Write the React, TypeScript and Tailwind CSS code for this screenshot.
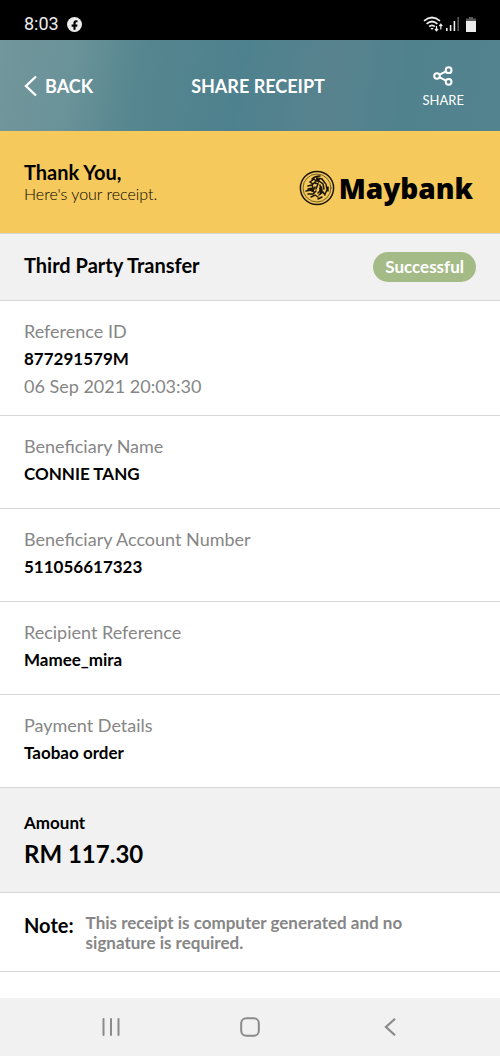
type Field = {
  label: string;
  value: string;
  date?: string;
};

const fields: Field[] = [
  { label: "Reference ID", value: "877291579M", date: "06 Sep 2021 20:03:30" },
  { label: "Beneficiary Name", value: "CONNIE TANG" },
  { label: "Beneficiary Account Number", value: "511056617323" },
  { label: "Recipient Reference", value: "Mamee_mira" },
  { label: "Payment Details", value: "Taobao order" },
];

function StatusBar() {
  return (
    <div className="flex h-10 items-center justify-between bg-black px-6 pt-2 text-[#ececec]">
      <div className="flex items-center gap-2">
        <span className="font-[Roboto,sans-serif] text-lg">8:03</span>
        {/* facebook */}
        <svg viewBox="0 0 14 14" className="size-[15px]">
          <circle cx="7" cy="7" r="7" fill="#ececec" />
          <path
            d="M6 12V9H4.3V7H6V5.7C6 3.9 7 3 8.6 3h1.2v1.8H8.9c-.7 0-.9.4-.9 1V7h1.8l-.3 2H8v3z"
            fill="#000"
          />
        </svg>
      </div>
      <div className="flex items-center">
        {/* wifi */}
        <svg viewBox="0 0 20 16" className="h-4 w-5" fill="none" stroke="currentColor">
          <path d="M1 4.8Q9 -1.8 17 4.8M3.6 7.8Q9 3.2 14.4 7.8M6.2 10.6Q9 8 11.8 10.6" strokeWidth="1.7" />
          <path d="M7.4 12h3.2L9 14z" fill="currentColor" stroke="none" />
          <path d="M13.5 10v5M12 13l1.5 1.8 1.5-1.8M17.8 13.4v-5M16.3 10l1.5-1.8L19.3 10" strokeWidth="1.2" />
        </svg>
        {/* signal */}
        <svg viewBox="0 0 14 14" className="ml-[3px] h-[14px] w-[14px]" fill="currentColor">
          <path d="M0 11h1.6v3H0zM3.8 8h1.6v6H3.8zM7.6 4h1.6v10H7.6z" />
          <path d="M11.4 0H13v14h-1.6z" fill="#5a5a5a" />
        </svg>
        {/* battery */}
        <svg viewBox="0 0 10 15" className="ml-[6px] h-[15px] w-[10px]">
          <path d="M3 0h4v1.5h3V5H0V1.5h3z" fill="#5a5a5a" />
          <path d="M0 4h10v11H0z" fill="#ececec" />
        </svg>
      </div>
    </div>
  );
}

function Header() {
  return (
    <header className="grid h-[91px] grid-cols-[1fr_auto_1fr] items-center bg-[linear-gradient(100deg,#72979c_0%,#6a9299_15%,#56868f_28%,#4e818e_48%,#58838e_66%,#50828e_80%,#53838e_100%)] px-6 text-white">
      <button type="button" className="flex items-center gap-2 text-lg font-bold">
        <svg viewBox="0 0 13 22" className="h-[22px] w-[13px]" fill="none" stroke="currentColor" strokeWidth="2.4">
          <path d="M12 1.5 2 11l10 9.5" />
        </svg>
        BACK
      </button>
      <h1 className="pl-4 text-lg font-bold">SHARE RECEIPT</h1>
      <button
        type="button"
        className="mr-3 flex flex-col items-center gap-1 justify-self-end pt-1 text-[13px] leading-5"
      >
        <svg viewBox="0 0 20 20" className="size-5" fill="none" stroke="currentColor" strokeWidth="2">
          <circle cx="4" cy="10" r="2.8" />
          <circle cx="15.6" cy="4.2" r="2.9" />
          <circle cx="15.6" cy="15.8" r="2.9" />
          <path d="m6.6 8.6 6.4-3.2M6.6 11.4l6.4 3.2" />
        </svg>
        SHARE
      </button>
    </header>
  );
}

function Logo() {
  return (
    <div className="mt-3 mr-[3px] flex items-center gap-1 text-black">
      <svg viewBox="0 0 36 36" className="size-9" fill="none" stroke="#1d1608" strokeLinecap="round">
        <circle cx="18" cy="18" r="16.6" strokeWidth="1.5" />
        <circle cx="18" cy="18" r="14" strokeWidth=".6" />
        {/* tiger head */}
        <path
          d="M13 9q3-3 8-3M11 12l4-3 2 2-3 3zM18 8l5 1 3 4M20 11l4 3 1 5M9 16l4-1 1 3-5 1M16 13l3 1-2 5M21 15l1 5-3 3M7 21l5-1 3 2M9 24l5 0 3-3M12 27l4-2 3 2M20 25l4-3 2 3M19 29l4-2M27 14l1 6-2 4M29 17v4M16 17l-2 4"
          strokeWidth="1.5"
        />
        <path d="M17 7l4 2-1 4-3-2zM20 18l3-2 1 6-3 3zM12 18l3 1-1 3-3-1z" fill="#1d1608" stroke="none" />
      </svg>
      <span className="font-['Noto_Sans',sans-serif] text-[28px] leading-8 font-black">Maybank</span>
    </div>
  );
}

function NavBar() {
  return (
    <nav className="grid h-[58px] grid-cols-[1fr_auto_1fr] items-center bg-[#f1f1f1] text-[#8a8a8a]">
      <button type="button" aria-label="Recent apps" className="mr-30 justify-self-end">
        <svg viewBox="0 0 18 18" className="size-[18px]" stroke="currentColor" strokeWidth="2" strokeLinecap="round">
          <path d="M1.5 1v16M9 1v16M16.5 1v16" />
        </svg>
      </button>
      <button type="button" aria-label="Home">
        <svg viewBox="0 0 20 20" className="size-5" fill="none" stroke="currentColor" strokeWidth="2">
          <rect x="1.2" y="1.2" width="17.6" height="17.6" rx="5" />
        </svg>
      </button>
      <button type="button" aria-label="Back" className="ml-31 justify-self-start">
        <svg viewBox="0 0 12 18" className="h-[18px] w-3" fill="none" stroke="currentColor" strokeWidth="2.2">
          <path d="M11 .8 2 9l9 8.2" />
        </svg>
      </button>
    </nav>
  );
}

export default function App() {
  return (
    <div className="flex min-h-screen flex-col bg-white font-[Lato,sans-serif] text-black">
      <StatusBar />
      <Header />
      {/* thank you banner */}
      <section className="flex h-[102px] items-center justify-between bg-[#f5c95b] px-6">
        <div>
          <h2 className="text-xl leading-6 font-bold">Thank You,</h2>
          <p className="text-base leading-5 font-light">Here's your receipt.</p>
        </div>
        <Logo />
      </section>
      {/* transfer status */}
      <section className="flex h-[68px] items-center justify-between border-y border-[#d8d8d8] bg-[#f1f1f1] px-6">
        <h2 className="pb-1 text-xl font-bold">Third Party Transfer</h2>
        <span className="rounded-full bg-[#a5bb87] px-3 py-1 text-[17px] leading-[22px] font-bold text-white">
          Successful
        </span>
      </section>
      {/* details */}
      <dl>
        {fields.map((field) => (
          <div
            key={field.label}
            className={`border-b border-[#d8d8d8] px-6 pt-4 ${field.date ? "pb-[15px]" : "pb-[21px]"}`}
          >
            <dt className="text-lg leading-7 text-[#868686]">{field.label}</dt>
            <dd className="text-[17px] leading-[27px] font-bold">{field.value}</dd>
            {field.date && <dd className="text-lg leading-7 text-[#868686]">{field.date}</dd>}
          </div>
        ))}
      </dl>
      {/* amount */}
      <section className="border-b border-[#d8d8d8] bg-[#f1f1f1] px-6 pt-[22px] pb-5">
        <p className="text-[17px] leading-[26px] font-bold">Amount</p>
        <p className="text-2xl leading-9 font-bold">RM 117.30</p>
      </section>
      {/* note */}
      <section className="flex gap-3 border-b border-[#d8d8d8] px-6 pt-5 pb-[18px]">
        <p className="text-xl leading-6 font-bold">Note:</p>
        <p className="max-w-[340px] text-[17px] leading-5 font-bold text-[#868686]">
          This receipt is computer generated and no signature is required.
        </p>
      </section>
      <div className="mt-auto">
        <NavBar />
      </div>
    </div>
  );
}
